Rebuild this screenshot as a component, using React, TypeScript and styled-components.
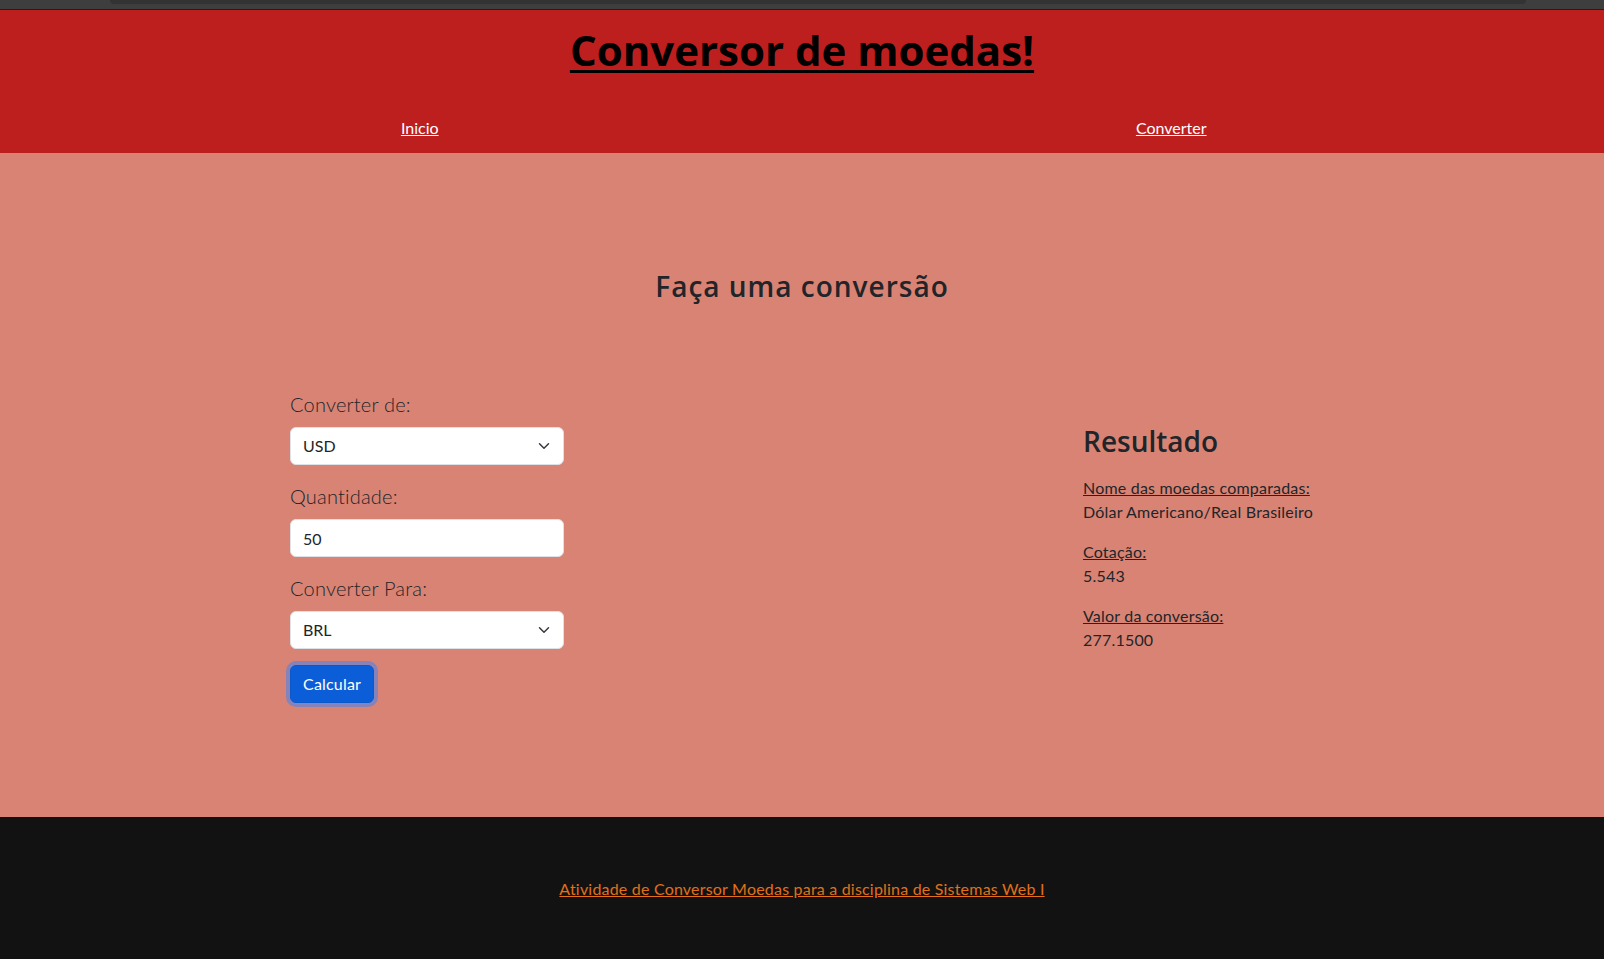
import React from "react";
import styled, { createGlobalStyle } from "styled-components";

const FONT = `Lato, "Noto Sans", "DejaVu Sans", sans-serif`;
const HEAD_FONT = `"Open Sans", "Noto Sans", "DejaVu Sans", sans-serif`;

const Global = createGlobalStyle`
  html, body { margin: 0; padding: 0; }
  body {
    font-family: ${FONT};
    font-size: 16px;
    line-height: 1.5;
    letter-spacing: 0.2px;
    color: #212529;
    background: #121212;
  }
  * { box-sizing: border-box; }
`;

const Page = styled.div`
  display: flex;
  flex-direction: column;
  min-height: 959px;
`;

const BrowserStrip = styled.div`
  height: 10px;
  background: #3e3e3e;
  border-bottom: 1px solid #1f1f1f;
  display: flex;
  padding: 0 78px 0 110px;
`;

const StripTab = styled.div`
  flex: 1;
  height: 4px;
  background: #333333;
  border-radius: 0 0 8px 8px;
`;

const Header = styled.header`
  background: #bd1e1e;
  padding: 16px 0 13px;
  text-align: center;
`;

const SiteTitle = styled.h1`
  margin: 0;
  font-family: ${HEAD_FONT};
  font-size: 42px;
  line-height: 48px;
  font-weight: 700;
  letter-spacing: 0;
`;

const TitleLink = styled.a`
  color: #000;
  text-decoration: underline;
  text-decoration-thickness: 3px;
  text-underline-offset: 4px;
`;

const NavList = styled.ul`
  list-style: none;
  margin: 42px 0 0;
  padding: 0 57px 0 44px;
  display: grid;
  grid-template-columns: 1fr 1fr;
  text-align: center;
`;

const NavLink = styled.a`
  color: #ffffff;
  font-size: 16px;
  line-height: 24px;
  letter-spacing: 0;
  text-decoration: underline;
`;

const Main = styled.main`
  background: #d98374;
  padding: 116px 0 114px;
`;

const SectionTitle = styled.h2`
  margin: 0 0 86px;
  text-align: center;
  font-family: ${HEAD_FONT};
  font-size: 28px;
  line-height: 34px;
  font-weight: 600;
  letter-spacing: 1px;
`;

const Row = styled.div`
  display: grid;
  grid-template-columns: 793px 1fr;
  padding-left: 290px;
  align-items: start;
`;

const Form = styled.form`
  width: 274px;
  display: flex;
  flex-direction: column;
`;

const Field = styled.div`
  margin-bottom: 16px;
`;

const Label = styled.label`
  display: block;
  font-size: 20px;
  line-height: 30px;
  font-weight: 300;
  margin-bottom: 8px;
`;

const SelectWrap = styled.div`
  position: relative;
`;

const Select = styled.select`
  appearance: none;
  width: 100%;
  height: 38px;
  padding: 6px 36px 6px 12px;
  font-family: ${FONT};
  font-size: 16px;
  line-height: 24px;
  color: #212529;
  background: #ffffff;
  border: 1px solid #dee2e6;
  border-radius: 6px;
`;

const Input = styled.input`
  width: 100%;
  height: 38px;
  padding: 6px 12px;
  font-family: ${FONT};
  font-size: 16px;
  line-height: 24px;
  color: #212529;
  background: #ffffff;
  border: 1px solid #dee2e6;
  border-radius: 6px;
`;

const Chevron = styled.svg`
  position: absolute;
  right: 12px;
  top: 13px;
  width: 16px;
  height: 12px;
  pointer-events: none;
`;

const Button = styled.button`
  align-self: flex-start;
  height: 38px;
  padding: 6px 12px;
  font-family: ${FONT};
  font-size: 16px;
  line-height: 24px;
  letter-spacing: 0.2px;
  color: #ffffff;
  background: #0b5ed7;
  border: 1px solid #0a58ca;
  border-radius: 6px;
  box-shadow: 0 0 0 4px rgba(49, 132, 253, 0.5);
`;

const Result = styled.section`
  margin-top: 35px;
`;

const ResultTitle = styled.h3`
  margin: 0 0 18px;
  font-family: ${HEAD_FONT};
  font-size: 28px;
  line-height: 34px;
  font-weight: 600;
  letter-spacing: 0;
`;

const Info = styled.p`
  margin: 0 0 16px;
  line-height: 24px;
`;

const InfoLabel = styled.span`
  text-decoration: underline;
`;

const Footer = styled.footer`
  flex: 1;
  background: #121212;
  padding: 60px 0 57px;
  text-align: center;
`;

const FooterLink = styled.a`
  color: #e0701a;
  text-decoration: underline;
`;

const ChevronIcon = () => (
  <Chevron viewBox="0 0 16 16" fill="none">
    <path
      d="M2 5l6 6 6-6"
      stroke="#343a40"
      strokeWidth="2"
      strokeLinecap="round"
      strokeLinejoin="round"
    />
  </Chevron>
);

const CurrencySelect = ({ value, options }: { value: string; options: string[] }) => (
  <SelectWrap>
    <Select defaultValue={value}>
      {options.map((o) => (
        <option key={o} value={o}>
          {o}
        </option>
      ))}
    </Select>
    <ChevronIcon />
  </SelectWrap>
);

const currencies = ["USD", "BRL", "EUR", "GBP", "JPY"];

export default function App() {
  return (
    <Page>
      <Global />
      <BrowserStrip>
        <StripTab />
      </BrowserStrip>
      <Header>
        <SiteTitle>
          <TitleLink href="#">Conversor de moedas!</TitleLink>
        </SiteTitle>
        <nav>
          <NavList>
            <li>
              <NavLink href="#">Inicio</NavLink>
            </li>
            <li>
              <NavLink href="#">Converter</NavLink>
            </li>
          </NavList>
        </nav>
      </Header>
      <Main>
        <SectionTitle>Faça uma conversão</SectionTitle>
        <Row>
          <Form onSubmit={(e) => e.preventDefault()}>
            <Field>
              <Label>Converter de:</Label>
              <CurrencySelect value="USD" options={currencies} />
            </Field>
            <Field>
              <Label>Quantidade:</Label>
              <Input type="text" defaultValue="50" />
            </Field>
            <Field>
              <Label>Converter Para:</Label>
              <CurrencySelect value="BRL" options={currencies} />
            </Field>
            <Button type="submit">Calcular</Button>
          </Form>
          <Result>
            <ResultTitle>Resultado</ResultTitle>
            <Info>
              <InfoLabel>Nome das moedas comparadas:</InfoLabel>
              <br />
              Dólar Americano/Real Brasileiro
            </Info>
            <Info>
              <InfoLabel>Cotação:</InfoLabel>
              <br />
              5.543
            </Info>
            <Info>
              <InfoLabel>Valor da conversão:</InfoLabel>
              <br />
              277.1500
            </Info>
          </Result>
        </Row>
      </Main>
      <Footer>
        <FooterLink href="#">
          Atividade de Conversor Moedas para a disciplina de Sistemas Web I
        </FooterLink>
      </Footer>
    </Page>
  );
}
